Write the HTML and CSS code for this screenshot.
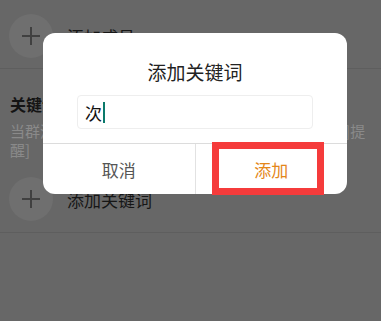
FILE: index.html
```html
<!DOCTYPE html>
<html lang="zh-CN">
<head>
    <meta charset="UTF-8">
    <meta name="viewport" content="width=device-width, initial-scale=1.0">
    <title>添加关键词</title>
    <link rel="stylesheet" href="styles.css">
</head>
<body>

    <div class="page">
        <!-- add member row -->
        <div class="add-row first">
            <div class="plus-circle"><span class="plus"></span></div>
            <div class="add-text">添加成员</div>
        </div>

        <!-- keyword section -->
        <div class="section">
            <div class="section-title">关键词</div>
            <div class="section-desc">当群消息中出现以下关键词时，你将会收到[关键词]提<br>醒]</div>
        </div>

        <div class="add-row second">
            <div class="plus-circle"><span class="plus"></span></div>
            <div class="add-text">添加关键词</div>
        </div>
    </div>

    <!-- dialog -->
    <div class="dialog">
        <div class="dialog-title">添加关键词</div>
        <div class="input-box">
            <span class="input-value">次</span><span class="caret"></span>
        </div>
        <div class="dialog-buttons">
            <div class="btn cancel">取消</div>
            <div class="btn confirm">添加</div>
        </div>
        <div class="highlight"></div>
    </div>

</body>
</html>
```

FILE: styles.css
```css
body {
    margin: 0;
    font-family: "Noto Sans CJK SC", "Noto Sans", sans-serif;
    background: #676767;
    width: 381px;
    height: 321px;
    overflow: hidden;
    position: relative;
}
.page {
    display: flex;
    flex-direction: column;
}
.add-row {
    display: flex;
    align-items: center;
    padding-left: 9px;
    border-bottom: 1px solid #5e5e5e;
}
.add-row.first {
    height: 64px;
    padding-top: 4px;
}
.add-row.second {
    height: 66px;
}
.plus-circle {
    width: 44px;
    height: 44px;
    border-radius: 50%;
    background: #6f6f6f;
    position: relative;
}
.plus {
    position: absolute;
    left: 13px;
    top: 21px;
    width: 18px;
    height: 2px;
    background: #404040;
}
.plus::after {
    content: "";
    position: absolute;
    left: 8px;
    top: -8px;
    width: 2px;
    height: 18px;
    background: #404040;
}
.add-text {
    margin-left: 14px;
    font-size: 17px;
    color: #161616;
}
.section {
    padding: 24px 0 7px 10px;
}
.section-title {
    font-size: 16px;
    line-height: 22px;
    font-weight: bold;
    color: #141414;
}
.section-desc {
    margin-top: 6px;
    font-size: 15px;
    line-height: 19px;
    color: #8a8a8a;
    white-space: nowrap;
}
.dialog {
    position: absolute;
    left: 43px;
    top: 33px;
    width: 304px;
    height: 161px;
    background: #fff;
    border-radius: 12px;
    display: flex;
    flex-direction: column;
}
.dialog-title {
    padding-top: 26px;
    font-size: 19px;
    line-height: 26px;
    text-align: center;
    color: #222;
}
.input-box {
    margin: 10px 34px 0;
    height: 32px;
    border: 1px solid #eeeeee;
    border-radius: 4px;
    display: flex;
    align-items: center;
    padding-left: 7px;
}
.input-value {
    font-size: 17px;
    color: #111;
}
.caret {
    width: 2px;
    height: 21px;
    background: #0b7a6b;
    margin-left: 1px;
}
.dialog-buttons {
    margin-top: 14px;
    flex: 1;
    display: flex;
    border-top: 1px solid #dcdcdc;
}
.btn {
    flex: 1;
    display: flex;
    align-items: center;
    justify-content: center;
    font-size: 17px;
}
.cancel {
    color: #555;
    border-right: 1px solid #e2e2e2;
}
.confirm {
    color: #e4871a;
}
.highlight {
    position: absolute;
    left: 169px;
    top: 109px;
    width: 98px;
    height: 39px;
    border: 7px solid #f53b3b;
}
```
